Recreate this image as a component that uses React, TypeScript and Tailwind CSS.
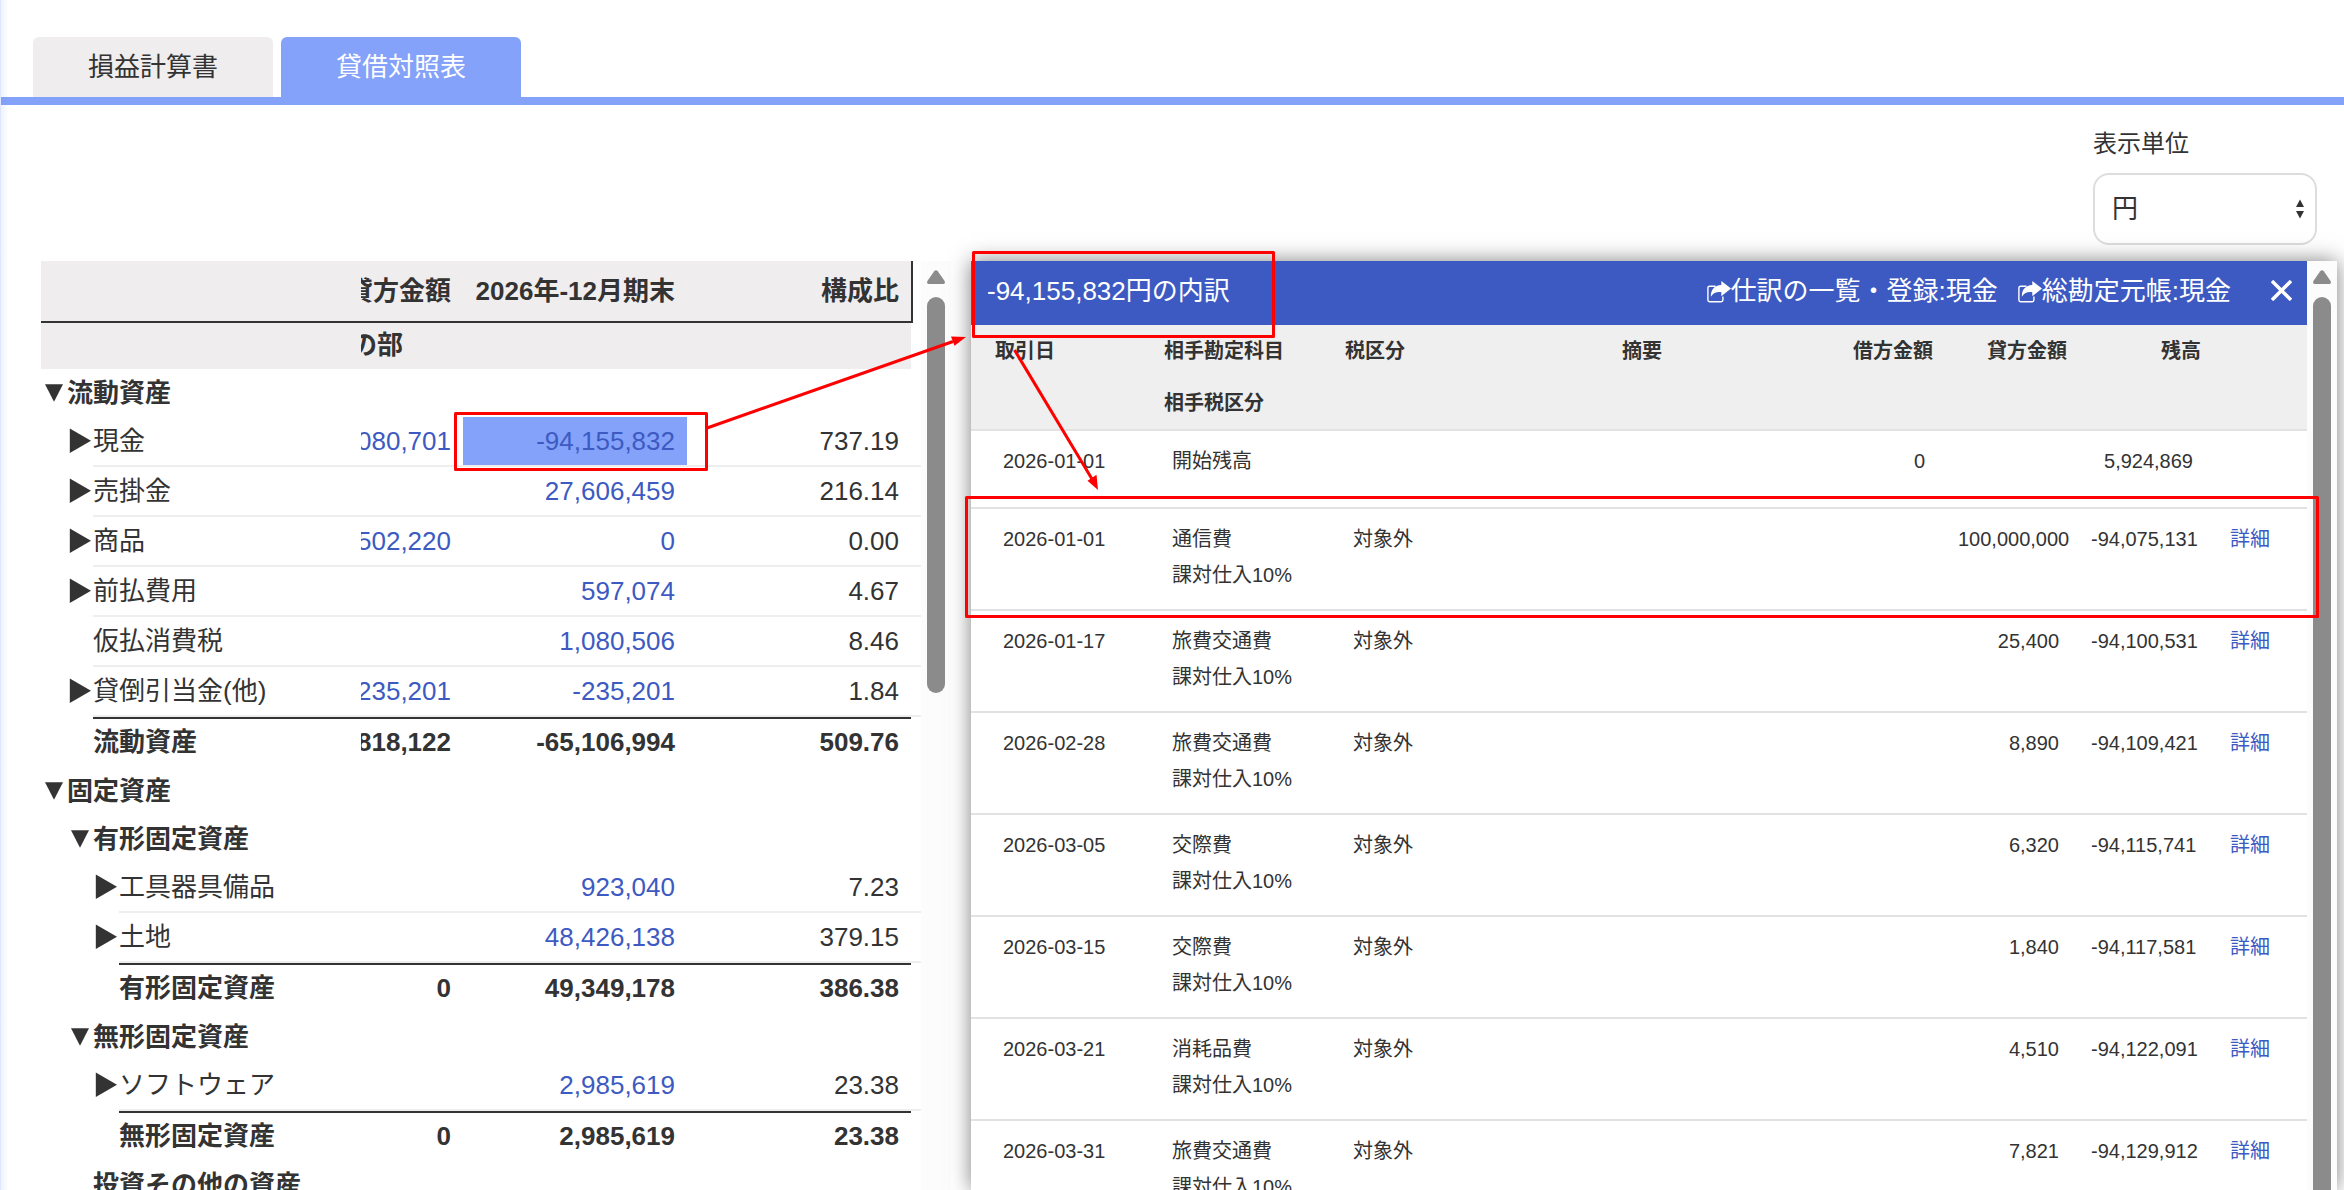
import React from "react";

type Row = {
  kind: "group" | "item" | "total";
  level: 0 | 1 | 2;
  label: string;
  marker?: "open" | "closed";
  credit?: string;
  balance?: string;
  ratio?: string;
  selected?: boolean;
};

const rows: Row[] = [
  { kind: "group", level: 0, label: "流動資産", marker: "open" },
  { kind: "item", level: 1, label: "現金", marker: "closed", credit: "080,701", balance: "-94,155,832", ratio: "737.19", selected: true },
  { kind: "item", level: 1, label: "売掛金", marker: "closed", balance: "27,606,459", ratio: "216.14" },
  { kind: "item", level: 1, label: "商品", marker: "closed", credit: "502,220", balance: "0", ratio: "0.00" },
  { kind: "item", level: 1, label: "前払費用", marker: "closed", balance: "597,074", ratio: "4.67" },
  { kind: "item", level: 1, label: "仮払消費税", balance: "1,080,506", ratio: "8.46" },
  { kind: "item", level: 1, label: "貸倒引当金(他)", marker: "closed", credit: "235,201", balance: "-235,201", ratio: "1.84" },
  { kind: "total", level: 1, label: "流動資産", credit: "818,122", balance: "-65,106,994", ratio: "509.76" },
  { kind: "group", level: 0, label: "固定資産", marker: "open" },
  { kind: "group", level: 1, label: "有形固定資産", marker: "open" },
  { kind: "item", level: 2, label: "工具器具備品", marker: "closed", balance: "923,040", ratio: "7.23" },
  { kind: "item", level: 2, label: "土地", marker: "closed", balance: "48,426,138", ratio: "379.15" },
  { kind: "total", level: 2, label: "有形固定資産", credit: "0", balance: "49,349,178", ratio: "386.38" },
  { kind: "group", level: 1, label: "無形固定資産", marker: "open" },
  { kind: "item", level: 2, label: "ソフトウェア", marker: "closed", balance: "2,985,619", ratio: "23.38" },
  { kind: "total", level: 2, label: "無形固定資産", credit: "0", balance: "2,985,619", ratio: "23.38" },
  { kind: "group", level: 1, label: "投資その他の資産" },
];

const indent = { 0: "ml-[26px]", 1: "ml-[52px]", 2: "ml-[78px]" };

type Entry = { date: string; account: string; debit?: string; credit?: string; balance: string; opening?: boolean };

const entries: Entry[] = [
  { date: "2026-01-01", account: "開始残高", debit: "0", balance: "5,924,869", opening: true },
  { date: "2026-01-01", account: "通信費", credit: "100,000,000", balance: "-94,075,131" },
  { date: "2026-01-17", account: "旅費交通費", credit: "25,400", balance: "-94,100,531" },
  { date: "2026-02-28", account: "旅費交通費", credit: "8,890", balance: "-94,109,421" },
  { date: "2026-03-05", account: "交際費", credit: "6,320", balance: "-94,115,741" },
  { date: "2026-03-15", account: "交際費", credit: "1,840", balance: "-94,117,581" },
  { date: "2026-03-21", account: "消耗品費", credit: "4,510", balance: "-94,122,091" },
  { date: "2026-03-31", account: "旅費交通費", credit: "7,821", balance: "-94,129,912" },
];

function Marker({ type }: { type: "open" | "closed" }) {
  return (
    <svg className="absolute top-0 -left-[26px] h-[48px] w-[26px]" viewBox="0 0 26 48" fill="#333">
      {type === "open" ? <path d="M4 15.3H22L13 32.8Z" /> : <path d="M2.800 11.5L24 23.7L2.800 36Z" />}
    </svg>
  );
}

function ShareIcon() {
  return (
    <svg className="mt-px h-[22px] w-[24px] shrink-0" viewBox="0 0 24 22">
      <path
        d="M8.500 5.200H2.600Q0.900 5.200 0.900 6.900V19Q0.900 20.700 2.600 20.700H14.200Q15.900 20.700 15.900 19V15.500"
        fill="none"
        stroke="currentColor"
        strokeWidth="1.400"
      />
      <path d="M14.300 0L24 7.600L14.300 15.200V11.200C9.500 10.800 6.300 11.800 3.900 15.800C3.500 9 7.300 4.200 14.300 3.900Z" fill="currentColor" />
    </svg>
  );
}

function ScrollArrow() {
  return (
    <svg className="h-[14px] w-[18px]" viewBox="0 0 18 14" fill="#8b8b8b">
      <path d="M7.2 1.2Q9-0.9 10.8 1.2L17.6 11Q18.6 14 16 14H2Q-0.6 14 0.4 11Z" />
    </svg>
  );
}

function BalanceRow({ row }: { row: Row }) {
  const weight = row.kind === "item" ? "" : "font-bold";
  const number = row.kind === "item" ? "text-[#3d5ac2]" : "";
  const leading = row.kind === "total" ? "leading-[46px]" : "leading-[48px]";
  return (
    <div className={`${indent[row.level]} ${weight} ${leading} relative shrink-0`}>
      {row.kind === "total" && <div className="mr-[10px] h-[2px] bg-[#333]" />}
      {row.marker && <Marker type={row.marker} />}
      <div className="flex h-[48px] justify-between">
        <span className="whitespace-nowrap">{row.label}</span>
        {row.kind !== "group" && (
          <div className="flex shrink-0 pr-[10px] text-right">
            <div className="flex w-[102px] justify-end overflow-hidden pr-[12px]">
              <span className={number}>{row.credit}</span>
            </div>
            <div className={`w-[224px] pr-[12px] ${number} ${row.selected ? "bg-[#84a2f9]" : ""}`}>{row.balance}</div>
            <div className="w-[224px] pr-[12px]">{row.ratio}</div>
          </div>
        )}
      </div>
      {row.kind === "item" && <div className="h-[2px] bg-[#eee]" />}
    </div>
  );
}

function BalanceTable() {
  return (
    <section className="flex h-full w-[910px] text-[26px]">
      <div className="flex w-[880px] flex-col overflow-hidden">
        <div className="flex h-[62px] w-[872px] shrink-0 justify-end border-r-2 border-b-2 border-[#333] bg-[#efedee] font-bold leading-[60px] whitespace-nowrap">
          <div className="flex w-[102px] justify-end overflow-hidden pr-[12px]">
            <span>貸方金額</span>
          </div>
          <div className="w-[224px] pr-[12px] text-right">2026年-12月期末</div>
          <div className="w-[224px] pr-[12px] text-right">構成比</div>
        </div>
        <div className="flex h-[46px] w-[870px] shrink-0 bg-[#efedee] pl-[320px] font-bold leading-[44px]">
          <div className="flex w-[42px] justify-end overflow-hidden whitespace-nowrap">
            <span>資産の部</span>
          </div>
        </div>
        {rows.map((row, i) => (
          <BalanceRow key={i} row={row} />
        ))}
      </div>
      <div className="flex w-[30px] flex-col items-center bg-[#fcfcfc] pt-[9px]">
        <ScrollArrow />
        <div className="mt-[13px] h-[396px] w-[18px] rounded-full bg-[#8b8b8b]" />
      </div>
    </section>
  );
}

const grid = "grid grid-cols-[152px_166px_123px_316px_117px_118px_118px_66px] gap-x-4 px-6";

function DetailPanel() {
  return (
    <section className="flex h-full w-[1366px] shadow-[0_0_20px_rgba(0,0,0,0.5)]">
      <div className="flex w-[1336px] flex-col overflow-hidden bg-white">
        <header className="flex h-[64px] shrink-0 bg-[#3d5ac2] pl-4 text-[26px] leading-[60px] whitespace-nowrap text-white">
          <span className="flex-1">-94,155,832円の内訳</span>
          <div className="flex h-[60px] items-center">
            <ShareIcon />
            <span>仕訳の一覧・登録:現金</span>
          </div>
          <div className="ml-[20px] flex h-[60px] items-center">
            <ShareIcon />
            <span>総勘定元帳:現金</span>
          </div>
          <svg className="mt-[19px] mr-[15px] ml-[40px] h-[21px] w-[21px]" viewBox="0 0 21 21" stroke="currentColor" strokeWidth="3.4">
            <path d="M1 1L20 20M20 1L1 20" />
          </svg>
        </header>
        <div className={`${grid} h-[106px] shrink-0 border-b-2 border-[#e2e2e2] bg-[#efefef] text-[20px] font-bold leading-[52px] whitespace-nowrap`}>
          <div>取引日</div>
          <div className="pl-px">
            <div>相手勘定科目</div>
            <div>相手税区分</div>
          </div>
          <div>税区分</div>
          <div className="text-center">摘要</div>
          <div className="text-right">借方金額</div>
          <div className="text-right">貸方金額</div>
          <div className="text-right">残高</div>
        </div>
        {entries.map((e, i) => (
          <div
            key={i}
            className={`${grid} ${e.opening ? "h-[78px]" : "h-[102px]"} shrink-0 border-b-2 border-[#e2e2e2] pt-3 text-[20px] leading-[36px] whitespace-nowrap`}
          >
            <div className="px-2">{e.date}</div>
            <div className="pr-2 pl-[9px]">
              <div>{e.account}</div>
              {!e.opening && <div>課対仕入10%</div>}
            </div>
            <div className="px-2">{e.opening ? "" : "対象外"}</div>
            <div />
            <div className="px-2 text-right">{e.debit}</div>
            <div className="pr-2 pl-[9px] text-right">{e.credit}</div>
            <div className="px-2 text-right">{e.balance}</div>
            <div className="text-center text-[#3d5ac2]">{e.opening ? "" : "詳細"}</div>
          </div>
        ))}
      </div>
      <div className="flex w-[30px] flex-col items-center bg-[#fcfcfc] pt-[9px]">
        <ScrollArrow />
        <div className="mt-[13px] w-[18px] flex-1 rounded-t-full bg-[#8b8b8b]" />
      </div>
    </section>
  );
}

function Annotations() {
  return (
    <svg className="pointer-events-none absolute inset-0 h-[1190px] w-[2344px]" viewBox="0 0 2344 1190" fill="none" stroke="#f00" strokeWidth="3" strokeLinejoin="round">
      <rect x="455.5" y="413.5" width="251" height="56" />
      <rect x="973.5" y="252.5" width="300" height="84" />
      <rect x="966.5" y="497.5" width="1351" height="119" />
      <path d="M707 428L953 341.500" />
      <path d="M1014.500 350L1092 479" />
      <path d="M966 337L951 336.600L954.500 345.800Z" fill="#f00" stroke="none" />
      <path d="M1098 490L1096.500 474.800L1087.500 480.800Z" fill="#f00" stroke="none" />
    </svg>
  );
}

export default function App() {
  return (
    <div className="relative flex h-[1190px] w-[2344px] flex-col overflow-hidden border-l border-[#dfe7ff] bg-white font-['Liberation_Sans','Noto_Sans_CJK_JP',sans-serif] text-[#333]">
      <nav className="flex h-[105px] shrink-0 items-end gap-2 border-b-8 border-[#84a2f9] pl-8 text-[26px] leading-[60px]">
        <div className="h-[60px] w-[240px] rounded-t-md bg-[#efedee] text-center">損益計算書</div>
        <div className="h-[60px] w-[240px] rounded-t-md bg-[#84a2f9] text-center text-white">貸借対照表</div>
      </nav>
      <div className="flex h-[156px] shrink-0 justify-end pt-[21px] pr-[27px]">
        <div className="w-[224px]">
          <div className="h-[47px] text-[24px] leading-[36px]">表示単位</div>
          <div className="flex h-[72px] items-center justify-between rounded-2xl border-2 border-[#ddd] bg-white pr-[11px] pl-[17px] text-[26px]">
            <span className="leading-[68px]">円</span>
            <svg className="h-[20px] w-[8px]" viewBox="0 0 8 20" fill="#333">
              <path d="M4 0.500L8 8H0ZM4 19.500L0 12H8Z" />
            </svg>
          </div>
        </div>
      </div>
      <main className="flex min-h-0 flex-1 gap-[20px] pl-[40px]">
        <BalanceTable />
        <DetailPanel />
      </main>
      <div className="absolute inset-y-0 left-0 w-[8px] bg-linear-to-r from-[#6482dc]/10 to-transparent" />
      <div className="absolute inset-y-0 -left-px">
        <Annotations />
      </div>
    </div>
  );
}
